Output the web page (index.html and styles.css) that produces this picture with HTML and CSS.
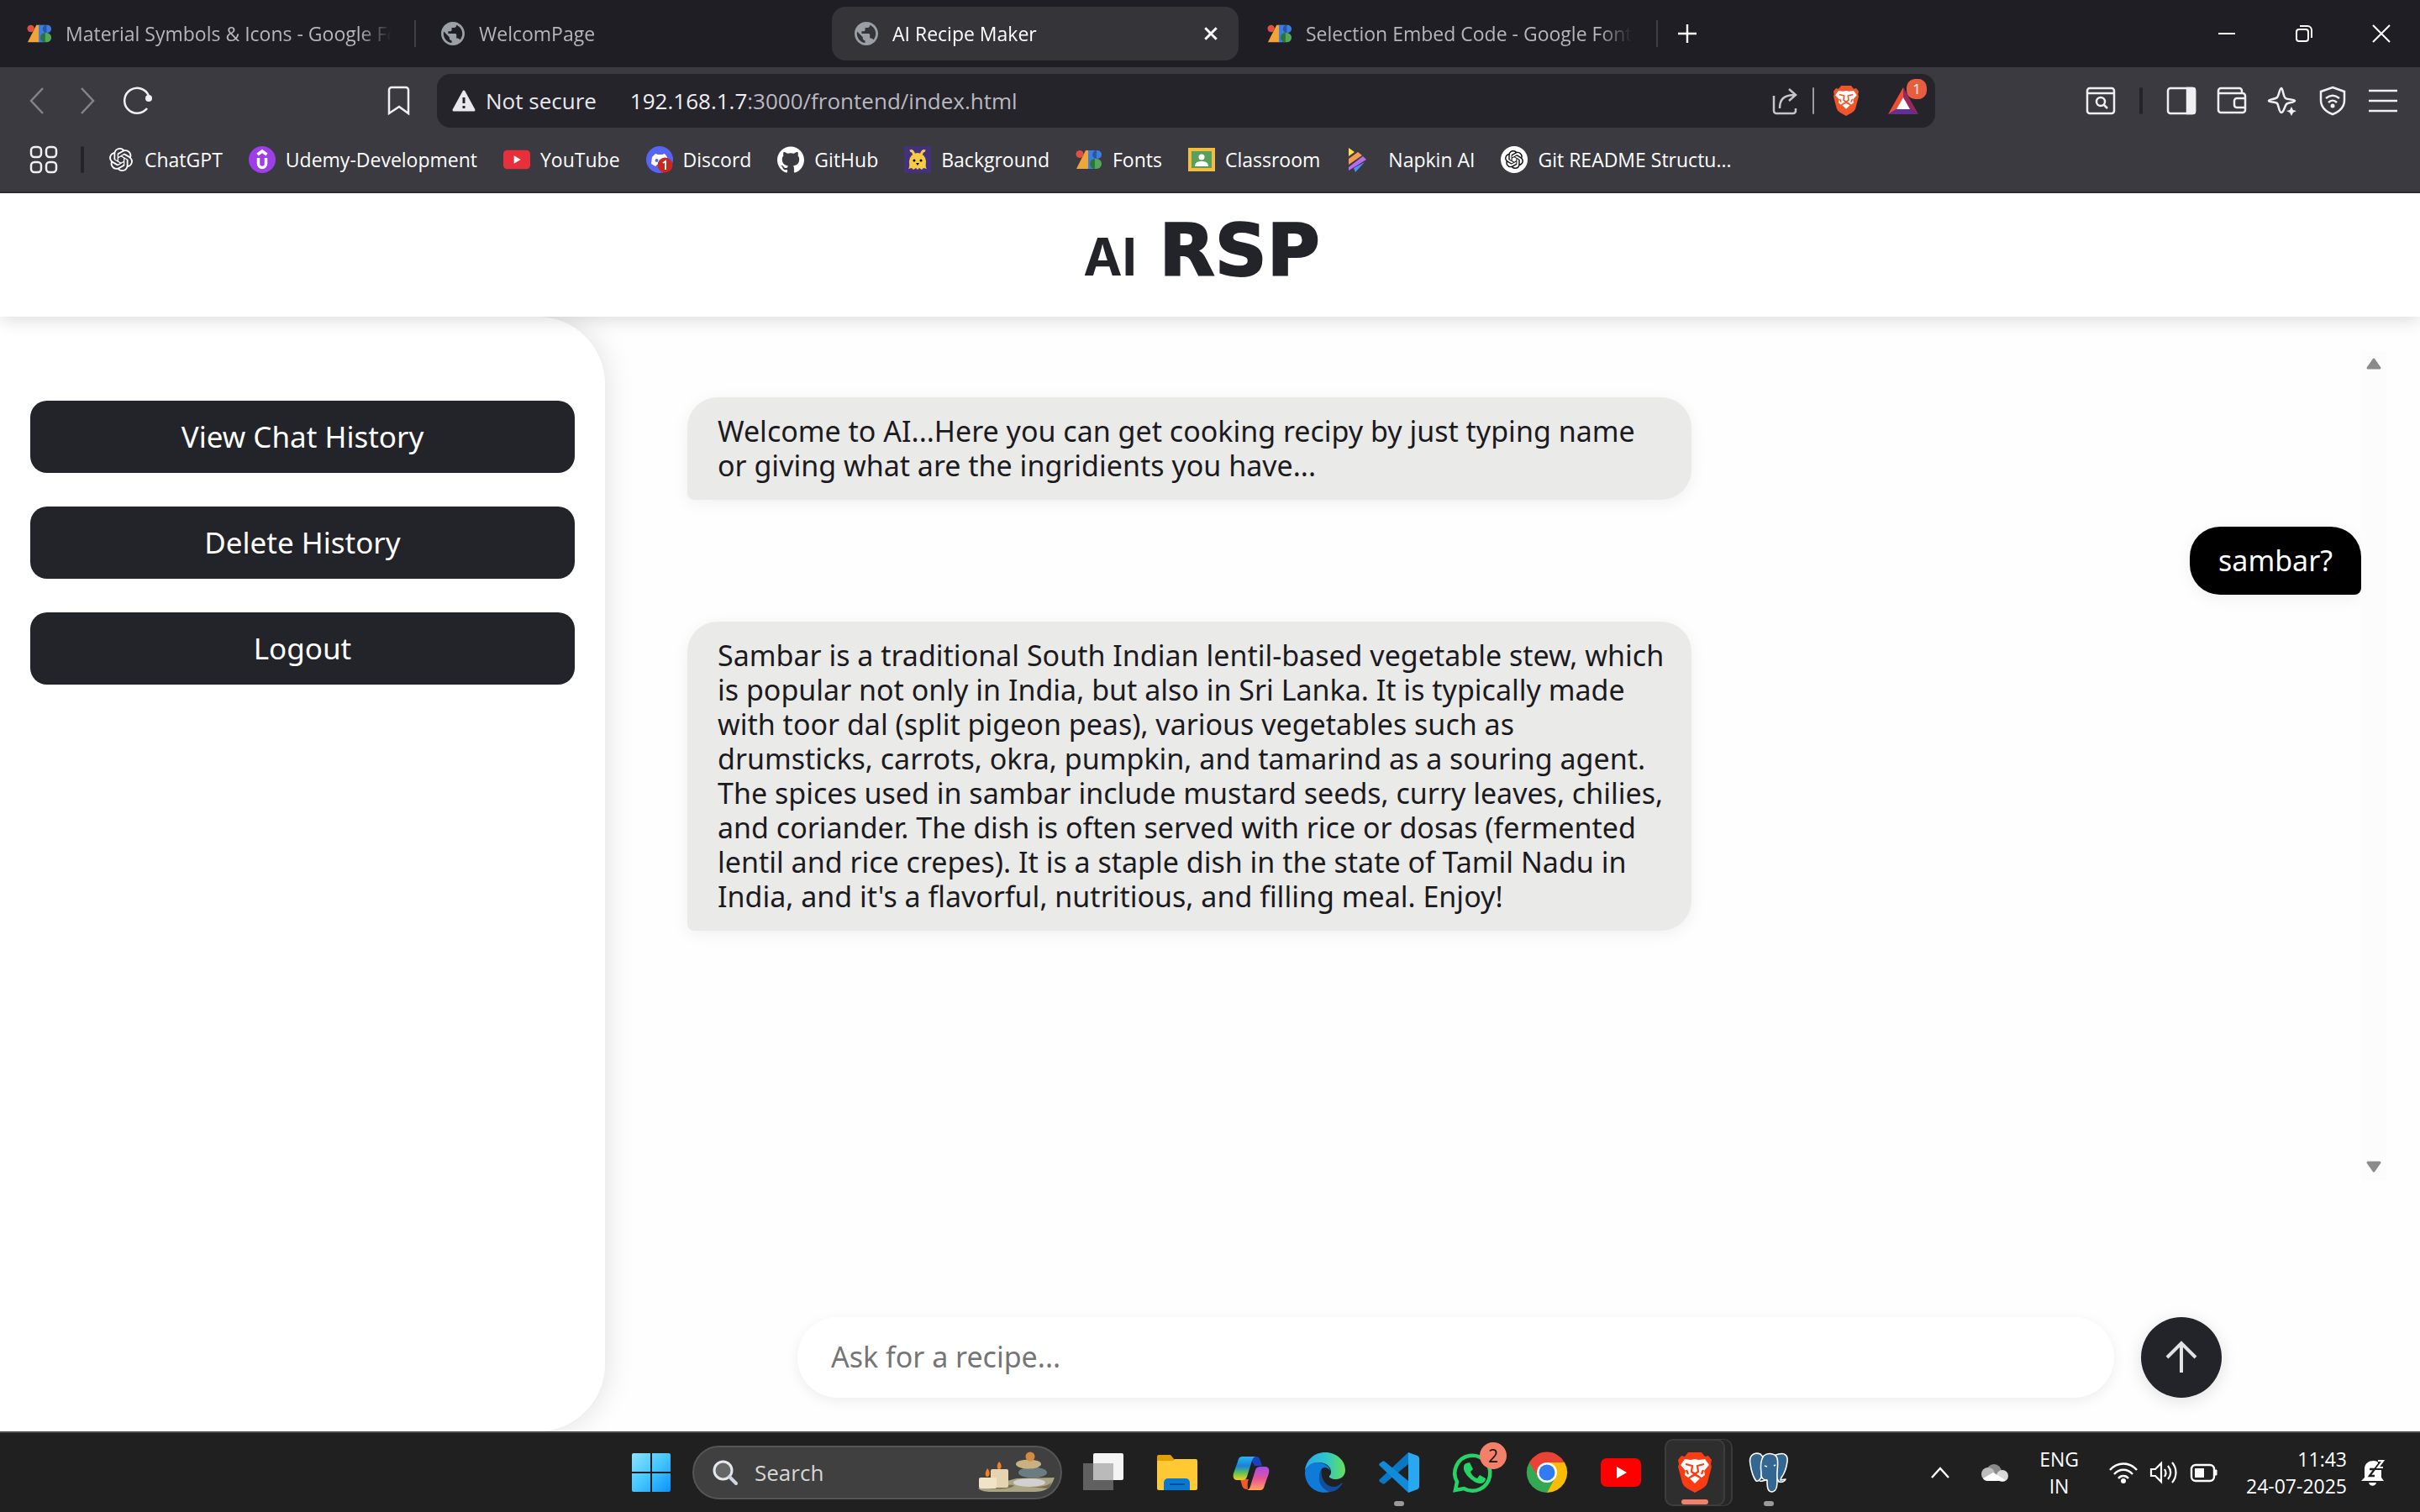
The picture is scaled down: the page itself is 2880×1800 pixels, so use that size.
FILE: index.html
```html
<!DOCTYPE html>
<html lang="en">
<head>
<meta charset="utf-8">
<title>AI Recipe Maker</title>
<link rel="stylesheet" href="styles.css">
</head>
<body>
<svg class="defs" aria-hidden="true">
  <symbol id="globe" viewBox="2 2 20 20"><path fill="#9aa0a6" d="M12 2C6.48 2 2 6.48 2 12s4.48 10 10 10 10-4.48 10-10S17.52 2 12 2zm-1 17.93c-3.95-.49-7-3.85-7-7.93 0-.62.08-1.21.21-1.79L9 15v1c0 1.1.9 2 2 2v1.93zm6.9-2.54c-.26-.81-1-1.39-1.9-1.39h-1v-3c0-.55-.45-1-1-1H8v-2h2c.55 0 1-.45 1-1V7h2c1.1 0 2-.9 2-2v-.41c2.93 1.19 5 4.06 5 7.41 0 2.08-.8 3.97-2.1 5.39z"/></symbol>
  <symbol id="gfonts" viewBox="0 0 32 24"><path fill="#f0a53a" d="M12 1h4v22H1z"/><path fill="#3b7de0" d="M15 1h8v22h-8z"/><circle cx="5" cy="5.500" r="4.500" fill="#dd5144"/><path fill="#3b7de0" d="M23 1h3a5 5 0 0 1 0 10h-3z"/><path fill="#2a56a8" d="M25 1a5 5 0 0 0 0 10z"/><path fill="#53a857" d="M23 11h2a6 6 0 0 1 0 12h-2z"/><path fill="#2d7438" d="M23 11a6 6 0 0 0 0 12z"/></symbol>
  <symbol id="openai" viewBox="0 0 24 24"><path fill="currentColor" d="M22.2819 9.8211a5.9847 5.9847 0 0 0-.5157-4.9108 6.0462 6.0462 0 0 0-6.5098-2.9A6.0651 6.0651 0 0 0 4.9807 4.1818a5.9847 5.9847 0 0 0-3.9977 2.9 6.0462 6.0462 0 0 0 .7427 7.0966 5.98 5.98 0 0 0 .511 4.9107 6.051 6.051 0 0 0 6.5146 2.9001A5.9847 5.9847 0 0 0 13.2599 24a6.0557 6.0557 0 0 0 5.7718-4.2058 5.9894 5.9894 0 0 0 3.9977-2.9001 6.0557 6.0557 0 0 0-.7475-7.0729zm-9.022 12.6081a4.4755 4.4755 0 0 1-2.8764-1.0408l.1419-.0804 4.7783-2.7582a.7948.7948 0 0 0 .3927-.6813v-6.7369l2.02 1.1686a.071.071 0 0 1 .038.052v5.5826a4.504 4.504 0 0 1-4.4945 4.4944zm-9.6607-4.1254a4.4708 4.4708 0 0 1-.5346-3.0137l.142.0852 4.783 2.7582a.7712.7712 0 0 0 .7806 0l5.8428-3.3685v2.3324a.0804.0804 0 0 1-.0332.0615L9.74 19.9502a4.4992 4.4992 0 0 1-6.1408-1.6464zM2.3408 7.8956a4.485 4.485 0 0 1 2.3655-1.9728V11.6a.7664.7664 0 0 0 .3879.6765l5.8144 3.3543-2.0201 1.1685a.0757.0757 0 0 1-.071 0l-4.8303-2.7865A4.504 4.504 0 0 1 2.3408 7.872zm16.5963 3.8558L13.1038 8.364 15.1192 7.2a.0757.0757 0 0 1 .071 0l4.8303 2.7913a4.4944 4.4944 0 0 1-.6765 8.1042v-5.6772a.79.79 0 0 0-.407-.667zm2.0107-3.0231l-.142-.0852-4.7735-2.7818a.7759.7759 0 0 0-.7854 0L9.409 9.2297V6.8974a.0662.0662 0 0 1 .0284-.0615l4.8303-2.7866a4.4992 4.4992 0 0 1 6.6802 4.66zM8.3065 12.863l-2.02-1.1638a.0804.0804 0 0 1-.038-.0567V6.0742a4.4992 4.4992 0 0 1 7.3757-3.4537l-.142.0805L8.704 5.459a.7948.7948 0 0 0-.3927.6813zm1.0976-2.3654l2.602-1.4998 2.6069 1.4998v2.9994l-2.5974 1.4997-2.6067-1.4997Z"/></symbol>
  <symbol id="brave" viewBox="0 0 40 48"><path fill="currentColor" d="M12 0h16l4 5 4-1 4 5-1 5 1 3-5 19c-1 3-3 5-6 7l-9 5-9-5c-3-2-5-4-6-7L0 17l1-3-1-5 4-5 4 1z"/><path fill="#fff" d="M8 8l7 1 5-1 5 1 7-1 5 7-6 7 1 5-4 3-4-3-4-2-4 2-4 3-4-3 1-5-6-7zM20 28l6 3-6 6-6-6z"/><path fill="none" stroke="currentColor" stroke-width="2.200" d="M9 14l8 2-1 7 4 3 4-3-1-7 8-2M10 21l2 5M30 21l-2 5"/></symbol>
  <symbol id="play" viewBox="0 0 48 34"><rect width="48" height="34" rx="7" fill="currentColor"/><path fill="#fff" d="M19 10v14l12-7z"/></symbol>
</svg>

<div class="browser">
  <div class="tabstrip">
    <nav class="tabs" aria-label="Tabs">
      <a class="tab" href="#"><svg class="fav"><use href="#gfonts"/></svg><span class="tab-title">Material Symbols &amp; Icons - Google Fonts</span></a>
      <a class="tab divided" href="#"><svg class="fav"><use href="#globe"/></svg><span class="tab-title">WelcomPage</span></a>
      <div class="tab active"><svg class="fav"><use href="#globe"/></svg><span class="tab-title">AI Recipe Maker</span><button class="close-tab" aria-label="Close tab"><svg viewBox="0 0 16 16"><path d="M2 2l12 12M14 2L2 14" stroke="#fff" stroke-width="2.600"/></svg></button></div>
      <a class="tab" href="#"><svg class="fav"><use href="#gfonts"/></svg><span class="tab-title">Selection Embed Code - Google Fonts</span></a>
    </nav>
    <button class="new-tab divided" aria-label="New tab"><svg viewBox="0 0 22 22"><path d="M11 0v22M0 11h22" stroke="#fff" stroke-width="2.400"/></svg></button>
    <div class="window-buttons">
      <button aria-label="Minimize"><svg viewBox="0 0 20 20"><path d="M0 10h20" stroke="#fff" stroke-width="2"/></svg></button>
      <button aria-label="Restore"><svg viewBox="0 0 20 20" fill="none" stroke="#fff" stroke-width="2"><rect x="1" y="5" width="14" height="14" rx="3"/><path d="M5 1h9a5 5 0 0 1 5 5v9"/></svg></button>
      <button aria-label="Close window"><svg viewBox="0 0 20 20"><path d="M0 0l20 20M20 0L0 20" stroke="#fff" stroke-width="2"/></svg></button>
    </div>
  </div>

  <div class="toolbar">
    <div class="nav-buttons">
      <button class="dim" aria-label="Back"><svg viewBox="0 0 36 36"><path d="M25 3L11 18l14 15"/></svg></button>
      <button class="dim" aria-label="Forward"><svg viewBox="0 0 36 36"><path d="M11 3l14 15-14 15"/></svg></button>
      <button aria-label="Reload"><svg viewBox="0 0 36 36"><path d="M29 27A15 15 0 1 1 31 12"/><circle cx="31" cy="15" r="4" fill="#f0f0f2" stroke="none"/></svg></button>
    </div>
    <button class="bookmark" aria-label="Bookmark"><svg viewBox="0 0 36 36"><path d="M7 5a3 3 0 0 1 3-3h17a3 3 0 0 1 3 3v28l-11-8-12 8z"/></svg></button>
    <div class="omnibox">
      <svg class="warn" viewBox="0 0 28 26"><path d="M14 2l12 22H2z" fill="#e8e8ee" stroke="#e8e8ee" stroke-width="3" stroke-linejoin="round"/><path d="M14 9v7m0 3v3" stroke="#25242b" stroke-width="3"/></svg>
      <span>Not secure</span>
      <div class="url" role="textbox" aria-label="Address"><span>192.168.1.7</span>:3000/frontend/index.html</div>
      <svg class="tool share" viewBox="0 0 32 32"><path d="M2 10v18a3 3 0 0 0 3 3h20a3 3 0 0 0 3-3v-3M9 25c0-10 4-16 18-16M20 2l8 7-8 7"/></svg>
      <i class="bar light"></i>
      <svg class="shield"><use href="#brave"/></svg>
      <span class="bat"><svg viewBox="0 0 36 32"><path fill="#ee4f32" d="M18 0L0 32l10-6 8-13z"/><path fill="#97285f" d="M18 0l18 32-10-6-8-13z"/><path fill="#642f94" d="M0 32h36l-10-6H10z"/><path fill="#fff" d="M18 12l8 14H10z"/></svg><b>1</b></span>
    </div>
    <div class="tools">
      <svg class="tool" viewBox="0 0 36 36"><rect x="2" y="3" width="32" height="30" rx="3"/><path d="M2 9h32"/><circle cx="18" cy="19" r="5"/><path d="M22 23l4 4"/></svg>
      <i class="bar"></i>
      <svg class="tool" viewBox="0 0 36 36"><rect x="2" y="3" width="32" height="30" rx="3"/><path d="M25 3h7a2 2 0 0 1 2 2v26a2 2 0 0 1-2 2h-7z" fill="#f0f0f2"/></svg>
      <svg class="tool" viewBox="0 0 36 36"><path d="M30 9V6a3 3 0 0 0-3-3H5a3 3 0 0 0-3 3v23a3 3 0 0 0 3 3h26a3 3 0 0 0 3-3V12a3 3 0 0 0-3-3H2M34 15H24a3 3 0 0 0-3 3v5a3 3 0 0 0 3 3h10"/></svg>
      <svg class="tool" viewBox="0 0 36 36"><path d="M17 3c2 0 2 10 5 12s11 1 11 3-8 2-10 4-3 10-6 10-3-9-5-11-10-1-10-3 8-2 10-4 3-11 5-11z"/><path d="M29 25l2 4 4 1-4 2-2 4-2-4-4-2 4-1z" fill="#f0f0f2" stroke="none"/></svg>
      <svg class="tool" viewBox="0 0 36 36"><path d="M18 2l14 5v10c0 9-6 14-14 17C10 31 4 26 4 17V7zM10 15c5-4 11-4 16 0M13 20c3-3 7-3 10 0"/><circle cx="18" cy="24" r="2.500" fill="#f0f0f2" stroke="none"/></svg>
      <svg class="tool" viewBox="0 0 36 36"><path d="M1 6h34M1 18h34M1 30h34"/></svg>
    </div>
  </div>

  <nav class="bookmarks" aria-label="Bookmarks">
    <svg class="apps tool" viewBox="0 0 32 32"><rect x="1" y="1" width="12" height="12" rx="4"/><rect x="19" y="1" width="12" height="12" rx="4"/><rect x="1" y="19" width="12" height="12" rx="4"/><rect x="19" y="19" width="12" height="12" rx="4"/></svg>
    <i class="bar"></i>
    <a href="#"><svg class="bm"><use href="#openai" x="2" y="2" width="28" height="28"/></svg>ChatGPT</a>
    <a href="#"><svg class="bm" viewBox="0 0 32 32"><circle cx="16" cy="16" r="16" fill="#9b3fe8"/><path d="M10.500 10l5.500-4 5.500 4M11.500 14v7a4.500 4.500 0 0 0 9 0v-7" stroke="#fff" stroke-width="3.500" fill="none"/></svg>Udemy-Development</a>
    <a href="#"><svg class="bm red"><use href="#play" y="4" width="32" height="24"/></svg>YouTube</a>
    <a href="#"><svg class="bm" viewBox="0 0 32 32"><circle cx="16" cy="16" r="16" fill="#5865f2"/><path fill="#fff" d="M11 9l3 1h5l3-1 3 4 1 8-5 3-2-2h-6l-2 2-5-3 1-8z"/><circle cx="12.500" cy="17" r="2" fill="#5865f2"/><circle cx="22.500" cy="22.500" r="9" fill="#c8281e"/><path d="M20 20l3-2v10" stroke="#fff" stroke-width="2" fill="none"/></svg>Discord</a>
    <a href="#"><svg class="bm" viewBox="0 0 24 24"><path fill="#fff" d="M12 .297c-6.630 0-12 5.373-12 12 0 5.303 3.438 9.800 8.205 11.385.6.113.82-.258.82-.577 0-.285-.01-1.040-.015-2.040-3.338.724-4.042-1.610-4.042-1.610C4.422 18.070 3.633 17.700 3.633 17.700c-1.087-.744.084-.729.084-.729 1.205.084 1.838 1.236 1.838 1.236 1.070 1.835 2.809 1.305 3.495.998.108-.776.417-1.305.76-1.605-2.665-.3-5.466-1.332-5.466-5.930 0-1.310.465-2.380 1.235-3.220-.135-.303-.54-1.523.105-3.176 0 0 1.005-.322 3.300 1.230.96-.267 1.980-.399 3-.405 1.020.006 2.040.138 3 .405 2.280-1.552 3.285-1.230 3.285-1.230.645 1.653.24 2.873.12 3.176.765.84 1.230 1.910 1.230 3.220 0 4.610-2.805 5.625-5.475 5.920.42.36.81 1.096.81 2.220 0 1.606-.015 2.896-.015 3.286 0 .315.21.69.825.57C20.565 22.092 24 17.592 24 12.297c0-6.627-5.373-12-12-12"/></svg>GitHub</a>
    <a href="#"><svg class="bm" viewBox="0 0 32 32"><path fill="#43317b" d="M0 0h32v32H0z"/><path d="M12 11C11 6 9 5 7 6M20 11c1-5 3-6 5-5" stroke="#f7cb45" stroke-width="3" fill="none"/><path fill="#f7cb45" d="M6 18a10 10 0 0 1 20 0c0 4-1 6 1 9l-4-1-2 2-3-2-2 2-2-2-3 2-2-2-4 1c2-3 1-5 1-9z"/><circle cx="12" cy="17" r="1.500"/><circle cx="20" cy="17" r="1.500"/><path d="M14 20h4l-2 3z"/></svg>Background</a>
    <a href="#"><svg class="bm"><use href="#gfonts" width="32" height="24" y="4"/></svg>Fonts</a>
    <a href="#"><svg class="bm" viewBox="0 0 32 32"><path fill="#f1bd42" d="M0 2h32v28H0z"/><path fill="#58a05c" d="M4 6h24v20H4z"/><circle cx="16" cy="13" r="3.500" fill="#fff"/><path fill="#fff" d="M8 24c0-4 3-6 8-6s8 2 8 6z"/></svg>Classroom</a>
    <a href="#"><svg class="bm wide" viewBox="0 0 38 32"><path fill="#ffe14d" d="M3 2l7 5-7 5z"/><path fill="#f79a52" d="M3 15l11-8 5 4L3 22z"/><path fill="#b86bf5" d="M3 25l17-13 4 4L3 29z"/><path fill="#4f8ef5" d="M9 26l13-7-11 12z"/></svg>Napkin AI</a>
    <a href="#"><svg class="bm"><circle cx="16" cy="16" r="16" fill="#fff"/><use class="ink" href="#openai" x="5" y="5" width="22" height="22"/></svg>Git README Structu...</a>
  </nav>
</div>

<div class="page">
  <header class="site-header"><h1>AI <span>RSP</span></h1></header>
  <div class="layout">
    <aside class="sidebar">
      <button>View Chat History</button>
      <button>Delete History</button>
      <button>Logout</button>
    </aside>
    <main class="chat">
      <div class="chat-box">
        <div class="messages">
          <p class="msg bot">Welcome to AI...Here you can get cooking recipy by just typing name or giving what are the ingridients you have...</p>
          <p class="msg user">sambar?</p>
          <p class="msg bot">Sambar is a traditional South Indian lentil-based vegetable stew, which is popular not only in India, but also in Sri Lanka. It is typically made with toor dal (split pigeon peas), various vegetables such as drumsticks, carrots, okra, pumpkin, and tamarind as a souring agent. The spices used in sambar include mustard seeds, curry leaves, chilies, and coriander. The dish is often served with rice or dosas (fermented lentil and rice crepes). It is a staple dish in the state of Tamil Nadu in India, and it's a flavorful, nutritious, and filling meal. Enjoy!</p>
        </div>
        <div class="scrollbar" aria-hidden="true">
          <svg viewBox="0 0 18 14"><path d="M9 2l7 10H2z"/></svg>
          <svg viewBox="0 0 18 14"><path d="M9 12L2 2h14z"/></svg>
        </div>
      </div>
      <form class="composer">
        <input type="text" aria-label="Ask for a recipe" placeholder="Ask for a recipe...">
        <button type="button" aria-label="Send"><svg viewBox="0 0 40 40"><path d="M20 38V4M3 20L20 3l17 17" fill="none" stroke="#e3e3e3" stroke-width="4"/></svg></button>
      </form>
    </main>
  </div>
</div>

<footer class="taskbar">
  <div class="dock">
    <button aria-label="Start"><svg viewBox="0 0 48 48"><defs><linearGradient id="win" x1="0" y1="0" x2="1" y2="1"><stop offset="0" stop-color="#8be3ff"/><stop offset=".5" stop-color="#45c6ff"/><stop offset="1" stop-color="#0a93f8"/></linearGradient></defs><path fill="url(#win)" d="M3 1h20v22H1V3a2 2 0 0 1 2-2zM25 1h20a2 2 0 0 1 2 2v20H25zM1 25h22v22H3a2 2 0 0 1-2-2zM25 25h22v20a2 2 0 0 1-2 2H25z"/></svg></button>
    <label class="search">
      <svg class="lens" viewBox="0 0 30 30"><circle cx="12.500" cy="12.500" r="10.500" fill="#666" stroke="#e4e8ec" stroke-width="3"/><path d="M20 20l8 8" stroke="#cfd8e2" stroke-width="4" stroke-linecap="round"/></svg>
      <input type="text" placeholder="Search" aria-label="Search">
      <svg class="candles" viewBox="0 0 92 48"><path fill="#aaa683" d="M0 43l46-12 45-1c-3 8-6 13-12 15-6 2-10 2-16 2H16C9 47 4 46 0 43z"/><path fill="#7e6d52" d="M12 43c10-3 22-5 31-4-2 5-20 5-31 4zM58 41c10 1 22 0 28-4l2-2-4 8z"/><rect x="15" y="20" width="21" height="22" rx="2" fill="#e6d4b0"/><rect x="1" y="30" width="21" height="13" rx="2" fill="#efe3c8"/><path fill="#f58220" d="M25 11c4 4 3 9 0 9s-3-5 0-9zM11 19c4 4 3 10 0 10s-3-5 0-10z"/><ellipse cx="61" cy="36" rx="19" ry="5" fill="#d3d0d0"/><ellipse cx="65" cy="24" rx="17" ry="6.500" fill="#6c7d80"/><ellipse cx="60" cy="14" rx="15" ry="5.500" fill="#c9b183"/><circle cx="62" cy="5" r="5.500" fill="#d38a43"/></svg>
    </label>
    <button aria-label="Task view"><svg viewBox="0 0 48 48"><path fill="#606060" d="M0 13h36v32H0z"/><rect x="12" y="1" width="36" height="32" rx="2" fill="#f4f4f4"/><path fill="#bababa" d="M12 13h24v20H12z"/></svg></button>
    <button aria-label="File Explorer"><svg viewBox="0 0 48 48"><path fill="#dfa000" d="M0 5a2 2 0 0 1 2-2h14l5 6v8H0z"/><path fill="#ffc933" d="M0 10h19l2-2h25a2 2 0 0 1 2 2v33a2 2 0 0 1-2 2H2a2 2 0 0 1-2-2z"/><path fill="#0b78cf" d="M8 45V36a5 5 0 0 1 5-5h21a5 5 0 0 1 5 5v9z"/><path d="M15 38h18" stroke="#084c8c" stroke-width="2"/></svg></button>
    <button aria-label="Copilot"><svg viewBox="0 0 48 48"><defs><linearGradient id="cpa" x1="0" y1="0" x2="0" y2="1"><stop offset="0" stop-color="#2bb2f5"/><stop offset=".4" stop-color="#1683d8"/><stop offset=".7" stop-color="#63c254"/><stop offset="1" stop-color="#f5d020"/></linearGradient><linearGradient id="cpb" x1="0" y1="0" x2="0" y2="1"><stop offset="0" stop-color="#a14de8"/><stop offset=".5" stop-color="#e8529a"/><stop offset="1" stop-color="#ffa25a"/></linearGradient></defs><path fill="#1a3fc0" d="M22 5h8c3 0 4 2 5 5l2 6h-9z"/><path fill="#f1592a" d="M11 32h10c-2 4-1 9-1 12-4 0-6-1-7-5z"/><path fill="url(#cpa)" d="M14 5h15c-3 1-4 4-5 8l-5 16c-1 3-3 4-6 4H7c-4 0-5-4-4-8l5-14c1-4 2-6 6-6z"/><path fill="url(#cpb)" d="M34 45H19c3-1 4-4 5-8l5-16c1-3 3-4 6-4h6c4 0 5 4 4 8l-5 14c-1 4-2 6-6 6z"/></svg></button>
    <button aria-label="Edge"><svg viewBox="0 0 48 48"><defs><linearGradient id="eda" x1="0" y1="0" x2="1" y2="0"><stop offset="0" stop-color="#2fa7e8"/><stop offset=".5" stop-color="#2cc4d0"/><stop offset="1" stop-color="#65e05a"/></linearGradient></defs><path fill="url(#eda)" d="M0 22C1 9 11 0 24 0c14 0 24 10 24 21 0 7-5 11-11 11-5 0-9-2-8-4 2-2 2-3 2-5 0-6-6-11-14-11S3 16 0 22z"/><path fill="#0f7bd8" d="M0 24c1-7 7-12 14-12 9 0 16 5 16 10-2-3-4-4-6-4-5 0-6 5-6 10 0 9 5 17 14 18.500C13 52 0 39 0 24z"/><path fill="#114f9e" d="M20 20c-2 9 4 21 14 21 4 0 7-2 9-4 1-1 2 0 1 1-4 6-9 9-15 9-8-3-13-10-12-18 0-4 1-7 3-9z"/></svg></button>
    <button class="running" aria-label="VS Code"><svg viewBox="0 0 48 48"><path fill="#0b76c2" d="M35 0L1 32c-1 1-1 2 0 3l3 2c1 1 2 1 3 0L35 14z"/><path fill="#118bd8" d="M35 48L1 16c-1-1-1-2 0-3l3-2c1-1 2-1 3 0l28 23z"/><path fill="#29a8f2" d="M35 0l11 4c1 1 2 2 2 3v34c0 1-1 2-2 3l-11 4z"/></svg></button>
    <button aria-label="WhatsApp"><svg viewBox="0 0 48 48"><path d="M5 35A21 21 0 1 1 13 43L3 45z" fill="none" stroke="#25d366" stroke-width="4.500"/><path fill="#25d366" d="M16 13l4-1 4 8-3 3c2 5 5 7 8 8l3-4 7 4c0 4-3 6-7 6-9-1-20-13-19-19 0-3 1-4 3-5z"/></svg><b class="badge">2</b></button>
    <button aria-label="Chrome"><svg viewBox="0 0 48 48"><path fill="#34a853" d="M24 24L3 12a24 24 0 0 0 21 36l11-18z"/><path fill="#fbbc05" d="M24 48a24 24 0 0 0 21-36H24l10 18z"/><path fill="#ea4335" d="M3 12a24 24 0 0 1 42 0H24L14 30z"/><circle cx="24" cy="24" r="12" fill="#fff"/><circle cx="24" cy="24" r="9.500" fill="#2f7bef"/></svg></button>
    <button class="yt" aria-label="YouTube"><svg><use href="#play" width="48" height="34" y="7"/></svg></button>
    <button class="current" aria-label="Brave"><svg><use href="#brave" x="4" width="40" height="48"/></svg></button>
    <button class="running" aria-label="PostgreSQL"><svg viewBox="0 0 48 48" fill="#336791" stroke="#fff" stroke-width="1.600" stroke-linejoin="round"><path d="M36 2c7-2 11 2 10 9-1 8-4 15-7 19l-1 3 6-1c-1 3-5 4-8 3l-3-5-8-25z"/><path d="M14 2C5-1 0 5 2 14c1 8 4 17 7 20 2 1 4-1 6-4l6-20z"/><path d="M18 4c5-4 14-3 16 3 2 8-1 15 0 24 0 8 0 15-6 16-5 0-6-4-6-14-4 0-8-2-7-8-1-8-1-16 3-21z"/><path d="M19 16l3 1M30 16l2-1M22 33c-4 0-6 2-9 1" fill="none"/></svg></button>
  </div>
  <div class="tray">
    <button aria-label="Show hidden icons"><svg class="chev" viewBox="0 0 24 16"><path d="M2 14L12 3l10 11" fill="none" stroke="#fff" stroke-width="2.400"/></svg></button>
    <svg class="cloud" viewBox="0 0 32 22"><circle cx="15" cy="10" r="9" fill="#8a8a8a"/><circle cx="8" cy="13" r="8" fill="#bcbcbc"/><circle cx="25" cy="15" r="7" fill="#d9d9d9"/><path fill="#fff" d="M2 18l12-7 15 9c-1 1-2 1-4 1H8c-3 0-5-1-6-3z"/></svg>
    <button class="lang">ENG<br>IN</button>
    <div class="status">
      <svg viewBox="0 0 34 28" fill="none" stroke="#fff" stroke-width="2.400"><path d="M1 11c9-10 23-10 32 0M6 16c6-7 16-7 22 0M11 21c3-4 9-4 12 0"/><circle cx="17" cy="24" r="3" fill="#fff" stroke="none"/></svg>
      <svg viewBox="0 0 34 28" fill="none" stroke="#fff" stroke-width="2.200"><path d="M2 10h5l7-7v22l-7-7H2zM18 10c2 3 2 6 0 9M22 6c4 5 4 11 0 16M27 2c6 7 6 17 0 24"/></svg>
      <svg viewBox="0 0 34 28"><rect x="2" y="5" width="27" height="19" rx="5" fill="none" stroke="#fff" stroke-width="2.400"/><rect x="6" y="9" width="11" height="11" fill="#fff"/><path d="M30 11h2v6h-2z" fill="#fff" stroke="#fff"/></svg>
    </div>
    <button class="clock">11:43<br>24-07-2025</button>
    <svg class="bell" viewBox="0 0 28 32"><path fill="#fff" d="M4 22V12C4 5 9 2 15 2c4 0 8 3 9 8v12l3 4H0zM9 28h9c-1 5-8 5-9 0z"/><path d="M10 12h6l-6 8h6" fill="none" stroke="#202020" stroke-width="2.400"/><path d="M20 2h6l-6 8h6" fill="none" stroke="#202020" stroke-width="6"/><path d="M20 2h6l-6 8h6" fill="none" stroke="#fff" stroke-width="2.200"/></svg>
  </div>
</footer>
</body>
</html>
```
FILE: styles.css
```css
* { box-sizing: border-box; }
html, body { height: 100%; }
body {
  margin: 0;
  display: flex;
  flex-direction: column;
  font-family: "Open Sans", "Noto Sans", sans-serif;
  background: #fefefe;
}
button { font: inherit; color: inherit; border: 0; background: none; padding: 0; display: flex; align-items: center; justify-content: center; }
a { color: inherit; text-decoration: none; }
svg { flex: none; display: block; overflow: visible; }
.defs { position: absolute; width: 0; height: 0; overflow: hidden; }

/* browser chrome */
.browser { color: #fff; font-size: 23px; background: #3b3a40; border-bottom: 2px solid #2c2a30; }
.tabstrip { display: flex; align-items: center; height: 80px; background: #1f1e25; padding-left: 6px; }
.tabs { display: flex; gap: 8px; }
.tab { display: flex; align-items: center; gap: 16px; width: 484px; height: 64px; padding: 0 24px 0 26px; border-radius: 16px; color: #b6b6ba; position: relative; }
.tab.active { background: #353439; color: #fff; }
.fav { width: 30px; height: 28px; }
.tab-title { flex: 1; overflow: hidden; white-space: nowrap; -webkit-mask-image: linear-gradient(90deg, #000 90%, transparent); mask-image: linear-gradient(90deg, #000 90%, transparent); }
.divided::before { content: ""; position: absolute; left: -5px; top: 16px; width: 2px; height: 32px; background: #3f3e45; }
.close-tab svg { width: 18px; height: 18px; }
.new-tab { position: relative; width: 72px; height: 64px; margin-left: 6px; }
.new-tab.divided::before { left: -1px; }
.new-tab svg { width: 22px; height: 22px; }
.window-buttons { display: flex; margin-left: auto; }
.window-buttons button { width: 92px; height: 80px; }
.window-buttons svg { width: 20px; height: 20px; }

.toolbar { display: flex; align-items: center; height: 80px; padding: 0 26px 0 14px; }
.toolbar button { width: 60px; height: 60px; }
.toolbar button svg, .tool { width: 36px; height: 36px; fill: none; stroke: #f0f0f2; stroke-width: 2.5px; }
.toolbar .dim svg { stroke: #85848a; }
.nav-buttons { display: flex; }
.bookmark { margin-left: 250px; }
.omnibox { display: flex; align-items: center; flex: 1; height: 64px; margin-left: 16px; padding: 0 20px 0 18px; background: #25242b; border-radius: 16px; font-size: 26px; color: #e8e8ee; }
.warn { width: 28px; height: 26px; margin-right: 12px; }
.url { flex: 1; margin-left: 40px; color: #b9b9c0; }
.url span { color: #f0f0f4; }
.tool.share { width: 32px; height: 32px; stroke: #c4c4ca; }
.bar { flex: none; width: 4px; height: 32px; border-radius: 2px; background: #242329; }
.bar.light { width: 2px; margin: 0 22px 0 16px; background: #9a9aa0; }
.shield { width: 32px; height: 36px; color: #f0562a; margin-right: 34px; }
.bat { position: relative; }
.bat svg { width: 36px; height: 32px; }
.bat b { position: absolute; left: 22px; top: -10px; width: 24px; height: 24px; border-radius: 10px; background: #e85d3d; font-size: 17px; font-weight: 400; line-height: 24px; text-align: center; color: #fff; }
.tools { display: flex; align-items: center; gap: 24px; width: 551px; justify-content: flex-end; }
.tools .bar { margin: 0 4px; }

.bookmarks { display: flex; align-items: center; height: 68px; padding: 0 36px 8px; white-space: nowrap; gap: 31px; }
.bookmarks .apps { width: 32px; height: 32px; }
.bookmarks .bar { margin: 0 -3px; }
.bookmarks a { display: flex; align-items: center; gap: 12px; }
.bm { width: 32px; height: 32px; }
.bm.wide { width: 38px; }
.bm.red { color: #e8303a; }
.ink { color: #111; }

/* recipe app */
.page { flex: 1; display: flex; flex-direction: column; font-family: "Noto Sans", "Open Sans", sans-serif; color: #1a1a20; min-height: 0; }
.site-header { position: relative; z-index: 2; height: 147px; background: #fff; box-shadow: 0 4px 20px rgba(0, 0, 0, .14); display: flex; justify-content: center; padding-top: 18px; clip-path: inset(0 0 -40px); }
.site-header h1 { margin: 0; padding-right: 20px; font: 700 62px/100px Inter, sans-serif; color: #232429; }
.site-header h1 span { font: 700 86px/100px "DejaVu Sans", sans-serif; margin-left: 12px; -webkit-text-stroke: 2px #232429; }
.layout { flex: 1; display: flex; min-height: 0; }
.sidebar { width: 25%; padding: 100px 36px; display: flex; flex-direction: column; gap: 40px; background: #fff; border-radius: 0 80px 80px 0; box-shadow: 0 0 36px rgba(0, 0, 0, .13); }
.sidebar button { height: 86px; padding-bottom: 2px; border-radius: 20px; background: #232429; color: #fff; font-size: 35px; }
.chat { flex: 1; display: flex; flex-direction: column; padding: 40px 40px 40px 98px; }
.chat-box { display: flex; height: 988px; }
.messages { flex: 1; display: flex; flex-direction: column; align-items: flex-start; gap: 32px; padding-top: 56px; }
.msg { margin: 0; max-width: 60%; padding: 20px 30px 20px 36px; font-size: 34px; line-height: 41px; border-radius: 36px 36px 36px 8px; background: #eaeae8; box-shadow: 0 4px 20px rgba(0, 0, 0, .06); }
.msg.user { align-self: flex-end; background: #000; color: #fff; border-radius: 36px 36px 8px 36px; padding: 20px 34px; }
.scrollbar { width: 30px; background: #fcfcfc; display: flex; flex-direction: column; justify-content: space-between; align-items: center; padding: 9px 0; }
.scrollbar svg { width: 18px; height: 14px; fill: #8b8b8b; stroke: #8b8b8b; stroke-width: 3px; stroke-linejoin: round; }
.composer { display: flex; gap: 32px; margin: auto 196px 0 131px; }
.composer input { flex: 1; min-width: 0; height: 96px; border: 0; border-radius: 48px; padding: 0 40px 2px; font: 34px "Noto Sans", sans-serif; background: #fff; box-shadow: 0 4px 16px rgba(0, 0, 0, .07); }
.composer input::placeholder { color: #757575; opacity: 1; }
.composer button { width: 96px; height: 96px; border-radius: 50%; background: #232429; box-shadow: 0 4px 20px rgba(0, 0, 0, .12); }
.composer svg { width: 40px; height: 40px; }

/* desktop taskbar */
.taskbar { display: grid; grid-template-columns: 1fr auto 1fr; height: 96px; background: #202020; border-top: 2px solid #484848; color: #fff; font-size: 23px; }
.dock { grid-column: 2; display: flex; align-items: center; gap: 8px; }
.dock button { position: relative; width: 80px; height: 80px; border-radius: 10px; }
.dock svg { width: 48px; height: 48px; }
.search { display: flex; align-items: center; width: 440px; height: 64px; margin: 0 1px; padding: 0 6px 0 22px; border: 2px solid #555; border-radius: 32px; background: #404040; }
.dock .lens { width: 30px; height: 30px; }
.search input { flex: 1; min-width: 0; border: 0; background: none; padding: 0 0 0 20px; font: 26px "Open Sans", sans-serif; color: #d6d6d6; }
.search input::placeholder { color: #d6d6d6; opacity: 1; }
.dock .candles { width: 92px; height: 48px; }
.yt { color: #f00; }
.dock .current { width: 72px; margin: 0 4px; background: #2e2e2e; border: 2px solid #3d3d3d; box-shadow: 8px 0 0 -1px #262626, 9px 0 0 0 #3a3a3a; color: #fb3b12; }
.running::after, .current::after { content: ""; position: absolute; bottom: 0; width: 12px; height: 6px; border-radius: 3px; background: #9a9a9a; }
.current::after { width: 32px; background: #f5806a; }
.badge { position: absolute; right: 0; top: 4px; width: 32px; height: 32px; border-radius: 50%; background: #f5806a; color: #111; font-size: 21px; font-weight: 400; line-height: 32px; }
.tray { display: flex; align-items: center; justify-content: flex-end; padding-right: 42px; line-height: 32px; }
.chev { width: 24px; height: 16px; }
.cloud { width: 32px; height: 22px; margin: 0 37px; }
.lang { text-align: center; }
.status { display: flex; gap: 14px; margin: 0 33px 0 36px; }
.status svg { width: 34px; height: 28px; }
.tray .clock { text-align: right; }
.bell { width: 28px; height: 32px; margin-left: 17px; }
```
